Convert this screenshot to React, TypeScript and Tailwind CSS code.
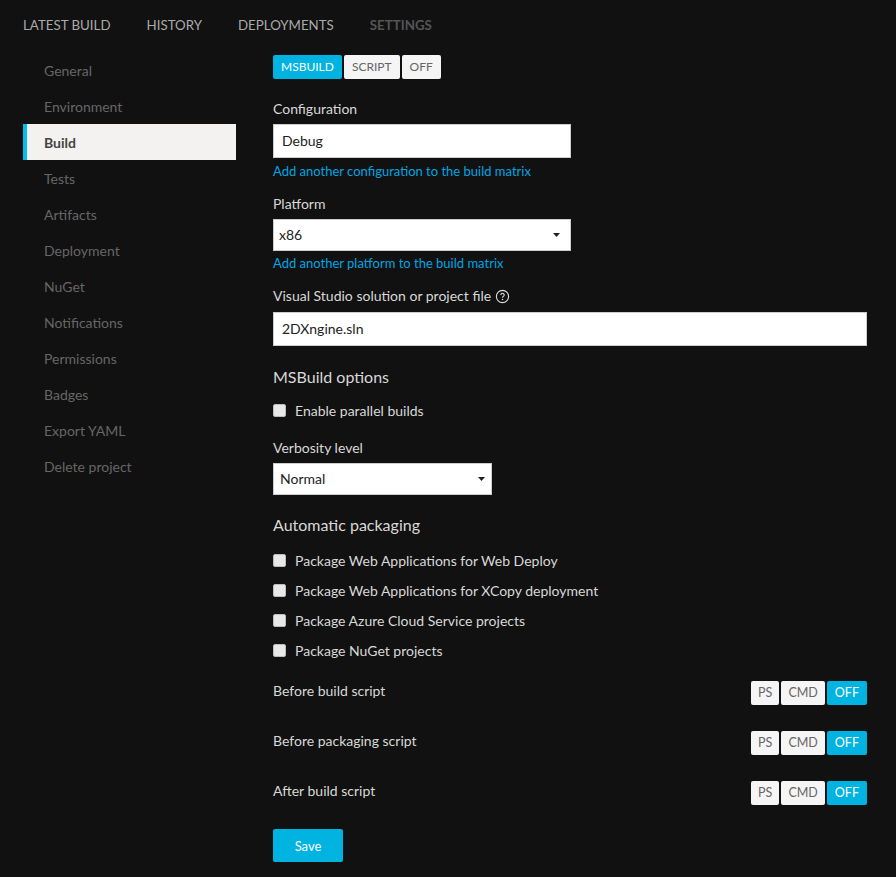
import { useState } from "react";

const tabs = ["LATEST BUILD", "HISTORY", "DEPLOYMENTS", "SETTINGS"];
const sideItems = [
  "General",
  "Environment",
  "Build",
  "Tests",
  "Artifacts",
  "Deployment",
  "NuGet",
  "Notifications",
  "Permissions",
  "Badges",
  "Export YAML",
  "Delete project",
];
const packaging = [
  "Package Web Applications for Web Deploy",
  "Package Web Applications for XCopy deployment",
  "Package Azure Cloud Service projects",
  "Package NuGet projects",
];
const scripts = ["Before build script", "Before packaging script", "After build script"];

function Caret() {
  return (
    <svg width="7" height="4" viewBox="0 0 7 4" className="ml-auto">
      <path d="M0 0h7L3.5 4z" fill="#222" />
    </svg>
  );
}

function Checkbox({ label }: { label: string }) {
  return (
    <label className="flex items-center h-[30px] text-[14px] text-[#d8d8d8]">
      <span className="w-[13px] h-[13px] rounded-[2px] bg-[#e8e8e8] border border-[#bbb] mr-[9px] -mt-[2px]" />
      {label}
    </label>
  );
}

function ScriptRow({ label }: { label: string }) {
  return (
    <div className="flex items-start h-[24px] text-[14px] leading-[20px] text-[#d8d8d8]">
      <span>{label}</span>
      <div className="ml-auto flex gap-[2px] text-[12.5px]">
        <span className="h-[24px] px-[7px] flex items-center rounded-[2px] bg-[#f5f5f5] text-[#666]">PS</span>
        <span className="h-[24px] px-[7px] flex items-center rounded-[2px] bg-[#f5f5f5] text-[#666]">CMD</span>
        <span className="h-[24px] px-[8px] flex items-center rounded-[2px] bg-[#00b3e0] text-white">OFF</span>
      </div>
    </div>
  );
}

export default function App() {
  const [active] = useState("Build");

  return (
    <div
      className="min-h-[877px] bg-[#111111] text-[#ccc]"
      style={{ fontFamily: "Lato, 'Noto Sans', sans-serif" }}
    >
      <nav className="flex gap-[36px] pl-[23px] pt-[15px] h-[50px] text-[13.3px] leading-[20px]">
        {tabs.map((t) => (
          <span key={t} className={t === "SETTINGS" ? "font-bold text-[#555]" : "text-[#aaa]"}>
            {t}
          </span>
        ))}
      </nav>

      <div className="flex">
        <aside className="w-[213px] ml-[23px] pt-[2px]">
          {sideItems.map((s) =>
            s === active ? (
              <div
                key={s}
                className="h-[36px] flex items-center pl-[17px] border-l-4 border-[#00c0ef] bg-[#f3f2f0] text-[#444] font-bold text-[14px]"
              >
                {s}
              </div>
            ) : (
              <div key={s} className="h-[36px] flex items-center pl-[21px] text-[14px] text-[#666]">
                {s}
              </div>
            )
          )}
        </aside>

        <main className="ml-[37px] w-[594px] pt-[5px] text-[14px] leading-[20px]">
          <div className="flex gap-[2px] text-[12px] h-[24px]">
            <span className="px-[8px] flex items-center rounded-[2px] bg-[#00b3e0] text-white">MSBUILD</span>
            <span className="px-[8px] flex items-center rounded-[2px] bg-[#f5f5f5] text-[#666]">SCRIPT</span>
            <span className="px-[8px] flex items-center rounded-[2px] bg-[#f5f5f5] text-[#666]">OFF</span>
          </div>

          <div className="mt-[20px] text-[#d8d8d8]">Configuration</div>
          <div className="mt-[5px] w-[298px] h-[34px] bg-white border border-[#ccc] flex items-center px-[8px] text-[#222]">
            Debug
          </div>
          <div className="mt-[4px] text-[13px] leading-[18px] text-[#00a6e0]">
            Add another configuration to the build matrix
          </div>

          <div className="mt-[14px] text-[#d8d8d8]">Platform</div>
          <div className="mt-[5px] w-[298px] h-[32px] bg-white border border-[#ccc] flex items-center pl-[5px] pr-[10px] text-[#222]">
            x86
            <Caret />
          </div>
          <div className="mt-[3px] text-[13px] leading-[18px] text-[#00a6e0]">
            Add another platform to the build matrix
          </div>

          <div className="mt-[14px] flex items-center gap-[4px] text-[#d8d8d8]">
            Visual Studio solution or project file
            <svg width="15" height="15" viewBox="0 0 16 16">
              <circle cx="8" cy="8" r="6.5" fill="none" stroke="#ddd" strokeWidth="1.2" />
              <path d="M6.2 6.4a1.8 1.8 0 1 1 2.6 1.6c-.6.3-.8.7-.8 1.3" fill="none" stroke="#ddd" strokeWidth="1.2" />
              <circle cx="8" cy="11.3" r=".8" fill="#ddd" />
            </svg>
          </div>
          <div className="mt-[6px] w-[594px] h-[34px] bg-white border border-[#ccc] flex items-center px-[8px] text-[#222]">
            2DXngine.sln
          </div>

          <div className="mt-[20px] text-[16px] leading-[22px] text-[#d8d8d8]">MSBuild options</div>
          <div className="mt-[8px]">
            <Checkbox label="Enable parallel builds" />
          </div>

          <div className="mt-[12px] text-[#d8d8d8]">Verbosity level</div>
          <div className="mt-[5px] w-[219px] h-[32px] bg-white border border-[#ccc] flex items-center pl-[6px] pr-[6px] text-[#222]">
            Normal
            <Caret />
          </div>

          <div className="mt-[19px] text-[16px] leading-[22px] text-[#d8d8d8]">Automatic packaging</div>
          <div className="mt-[10px] flex flex-col">
            {packaging.map((p) => (
              <Checkbox key={p} label={p} />
            ))}
          </div>

          <div className="mt-[15px] flex flex-col gap-[26px]">
            {scripts.map((s) => (
              <ScriptRow key={s} label={s} />
            ))}
          </div>

          <button className="mt-[24px] w-[70px] h-[33px] rounded-[2px] bg-[#00b3e0] text-white text-[13px]">
            Save
          </button>
        </main>
      </div>
    </div>
  );
}
